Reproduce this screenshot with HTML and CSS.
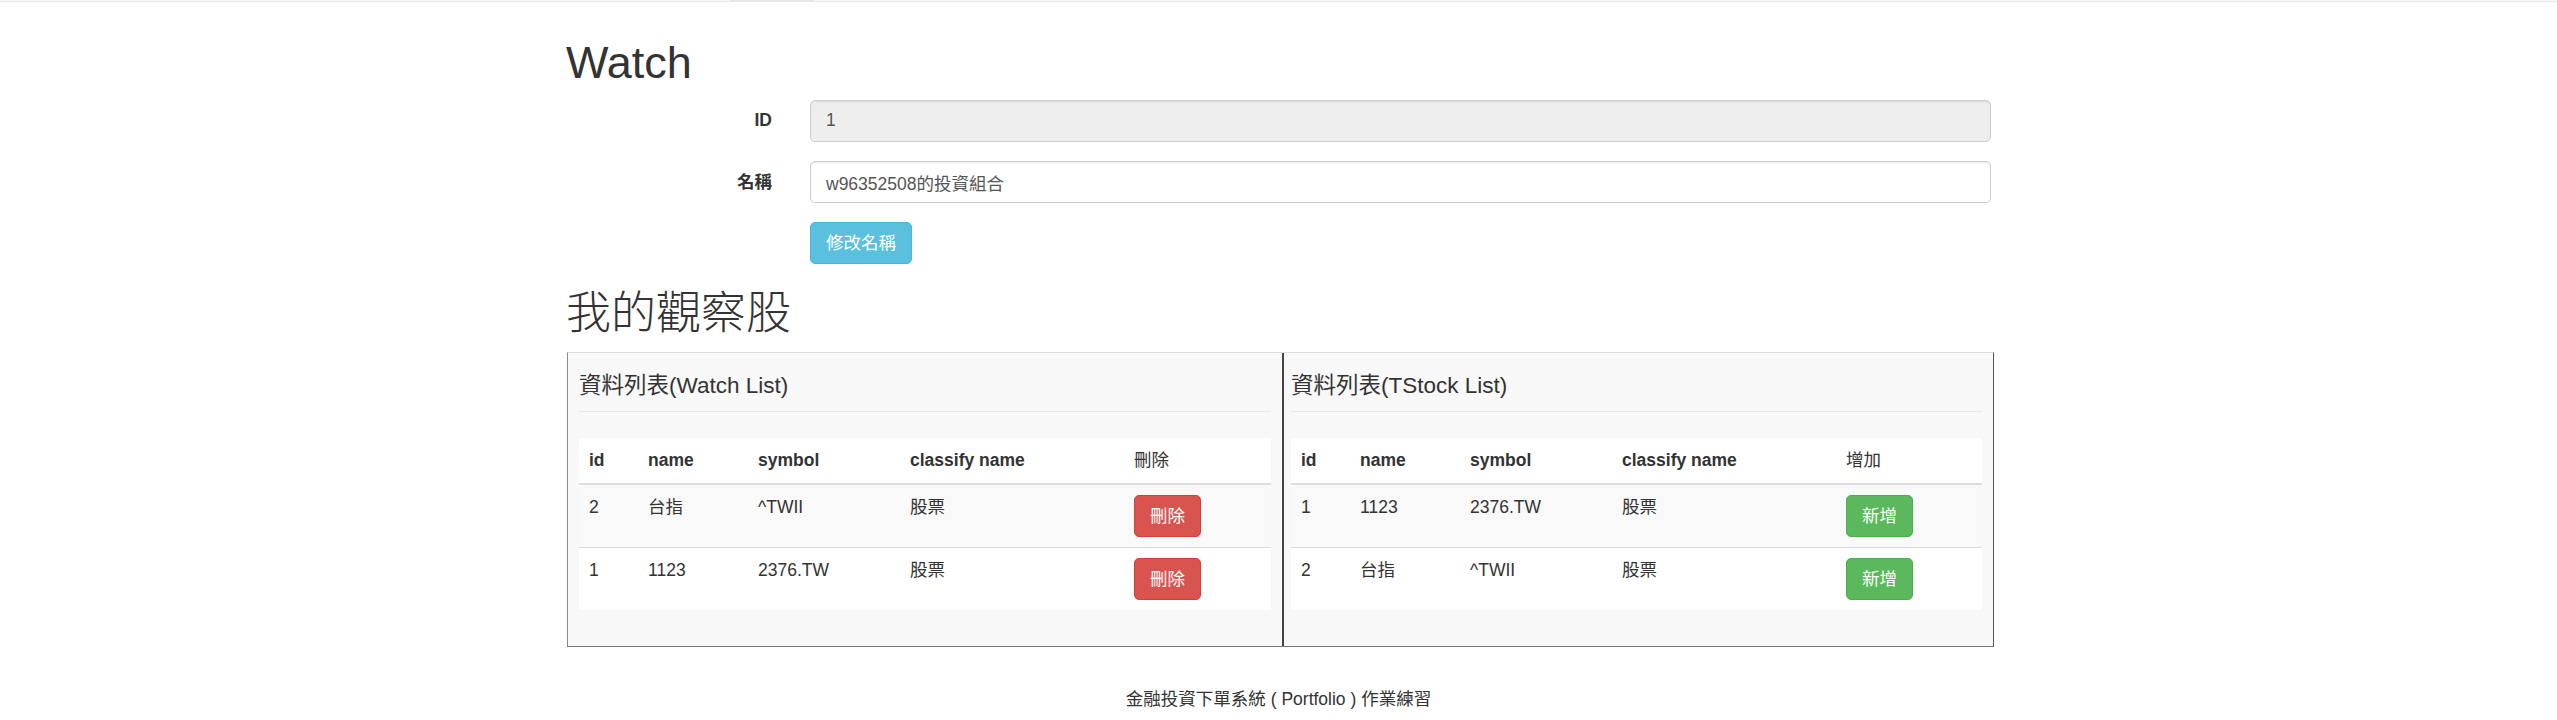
FILE: index.html
```html
<!DOCTYPE html>
<html lang="zh-Hant">
<head>
<meta charset="utf-8">
<title>Watch</title>
<link rel="stylesheet" href="styles.css">
</head>
<body>
<div class="topbar">
  <div class="topbar-inner">
    <div class="topbar-active"></div>
  </div>
</div>

<div class="container">
  <h1 class="page-title">Watch</h1>

  <form class="form-horizontal">
    <div class="form-group">
      <label class="control-label">ID</label>
      <input class="form-control" type="text" value="1" readonly>
    </div>
    <div class="form-group">
      <label class="control-label">名稱</label>
      <input class="form-control" type="text" value="w96352508的投資組合">
    </div>
    <div class="form-group last">
      <span></span>
      <div><button type="button" class="btn btn-info">修改名稱</button></div>
    </div>
  </form>

  <h1 class="section-title">我的觀察股</h1>

  <div class="panels">
    <div class="panel">
      <h4 class="panel-title">資料列表(Watch List)</h4>
      <table class="table">
        <colgroup>
          <col class="c-id"><col class="c-name"><col class="c-symbol"><col class="c-class"><col>
        </colgroup>
        <thead>
          <tr><th>id</th><th>name</th><th>symbol</th><th>classify name</th><th><span class="th-cjk">刪除</span></th></tr>
        </thead>
        <tbody>
          <tr><td>2</td><td>台指</td><td>^TWII</td><td>股票</td><td><button type="button" class="btn btn-danger">刪除</button></td></tr>
          <tr><td>1</td><td>1123</td><td>2376.TW</td><td>股票</td><td><button type="button" class="btn btn-danger">刪除</button></td></tr>
        </tbody>
      </table>
    </div>
    <div class="panel panel-right">
      <h4 class="panel-title">資料列表(TStock List)</h4>
      <table class="table">
        <colgroup>
          <col class="c-id"><col class="c-name"><col class="c-symbol"><col class="c-class"><col>
        </colgroup>
        <thead>
          <tr><th>id</th><th>name</th><th>symbol</th><th>classify name</th><th><span class="th-cjk">增加</span></th></tr>
        </thead>
        <tbody>
          <tr><td>1</td><td>1123</td><td>2376.TW</td><td>股票</td><td><button type="button" class="btn btn-success">新增</button></td></tr>
          <tr><td>2</td><td>台指</td><td>^TWII</td><td>股票</td><td><button type="button" class="btn btn-success">新增</button></td></tr>
        </tbody>
      </table>
    </div>
  </div>

  <footer class="footer">金融投資下單系統 ( Portfolio ) 作業練習</footer>
</div>
</body>
</html>
```

FILE: styles.css
```css
* { box-sizing: border-box; }

html, body {
  margin: 0;
  padding: 0;
  background: #fff;
}

body {
  font-family: "Liberation Sans", Arial, "Noto Sans CJK TC", sans-serif;
  font-size: 17.5px;
  line-height: 25px;
  color: #333;
}

.topbar {
  height: 2px;
  background: #f8f8f8;
  border-bottom: 1px solid #e7e7e7;
}
.topbar-inner {
  display: flex;
  padding-left: 730px;
}
.topbar-active {
  width: 84px;
  height: 1px;
  background: #e7e7e7;
}

.container {
  width: 1425px;
  margin: 0 auto;
}

.page-title {
  margin: 35.5px 0 12.5px;
  font-size: 45px;
  line-height: 49.5px;
  font-weight: 400;
}

.form-group {
  display: grid;
  grid-template-columns: 206px 1fr;
  column-gap: 38px;
  margin-bottom: 18.75px;
}
.form-group.last { margin-bottom: 0; }

.control-label {
  text-align: right;
  font-weight: 700;
  padding-top: 8.75px;
  line-height: 25px;
}

.form-control {
  display: block;
  width: 100%;
  height: 42.5px;
  padding: 7.5px 15px;
  font-family: inherit;
  font-size: 17.5px;
  line-height: 25px;
  color: #555;
  background: #fff;
  border: 1.25px solid #ccc;
  border-radius: 5px;
  box-shadow: inset 0 1.25px 1.25px rgba(0,0,0,.075);
}
.form-control[readonly] { background: #eee; }

.btn {
  display: inline-block;
  padding: 7.5px 15px;
  font-family: inherit;
  font-size: 17.5px;
  line-height: 25px;
  color: #fff;
  border: 1.25px solid transparent;
  border-radius: 5px;
  cursor: pointer;
  vertical-align: middle;
}
.btn-info { background: #5bc0de; border-color: #46b8da; }
.btn-danger { background: #d9534f; border-color: #d43f3a; }
.btn-success { background: #5cb85c; border-color: #4cae4c; }

.section-title {
  margin: 25px 0 13px;
  font-size: 45px;
  line-height: 49.5px;
  font-weight: 300;
}

.panels {
  display: grid;
  grid-template-columns: 714px 1fr;
  margin-left: 1px;
  width: 1427px;
  background: #f8f8f8;
  border-top: 1px solid #dcdcdc;
  border-left: 1px solid #8a8a8a;
  border-right: 1px solid #555;
  border-bottom: 1px solid #777;
}

.panel {
  padding: 10px 11px 11px;
}
.panel-right {
  border-left: 2px solid #444;
  padding-left: 7px;
}

.panel-title {
  margin: 11.5px 0 26px;
  padding-bottom: 12.5px;
  border-bottom: 1.25px solid #e8e8e8;
  font-size: 22.5px;
  line-height: 24.75px;
  font-weight: 400;
}

.table {
  width: 100%;
  border-collapse: collapse;
  border-spacing: 0;
  background: #fff;
  margin-bottom: 25px;
}
.table th, .table td {
  padding: 10px;
  text-align: left;
  vertical-align: top;
  line-height: 25px;
}
.table th {
  font-weight: 700;
  border-bottom: 2.5px solid #ddd;
  vertical-align: bottom;
}
.table td {
  border-top: 1.25px solid #ddd;
}
.table tbody tr:nth-child(odd) { background: #f9f9f9; }
.th-cjk { font-weight: 400; }

.c-id { width: 59px; }
.c-name { width: 110px; }
.c-symbol { width: 152px; }
.c-class { width: 224px; }

.footer {
  margin-top: 40px;
  text-align: center;
  line-height: 25px;
  color: #333;
}
```
